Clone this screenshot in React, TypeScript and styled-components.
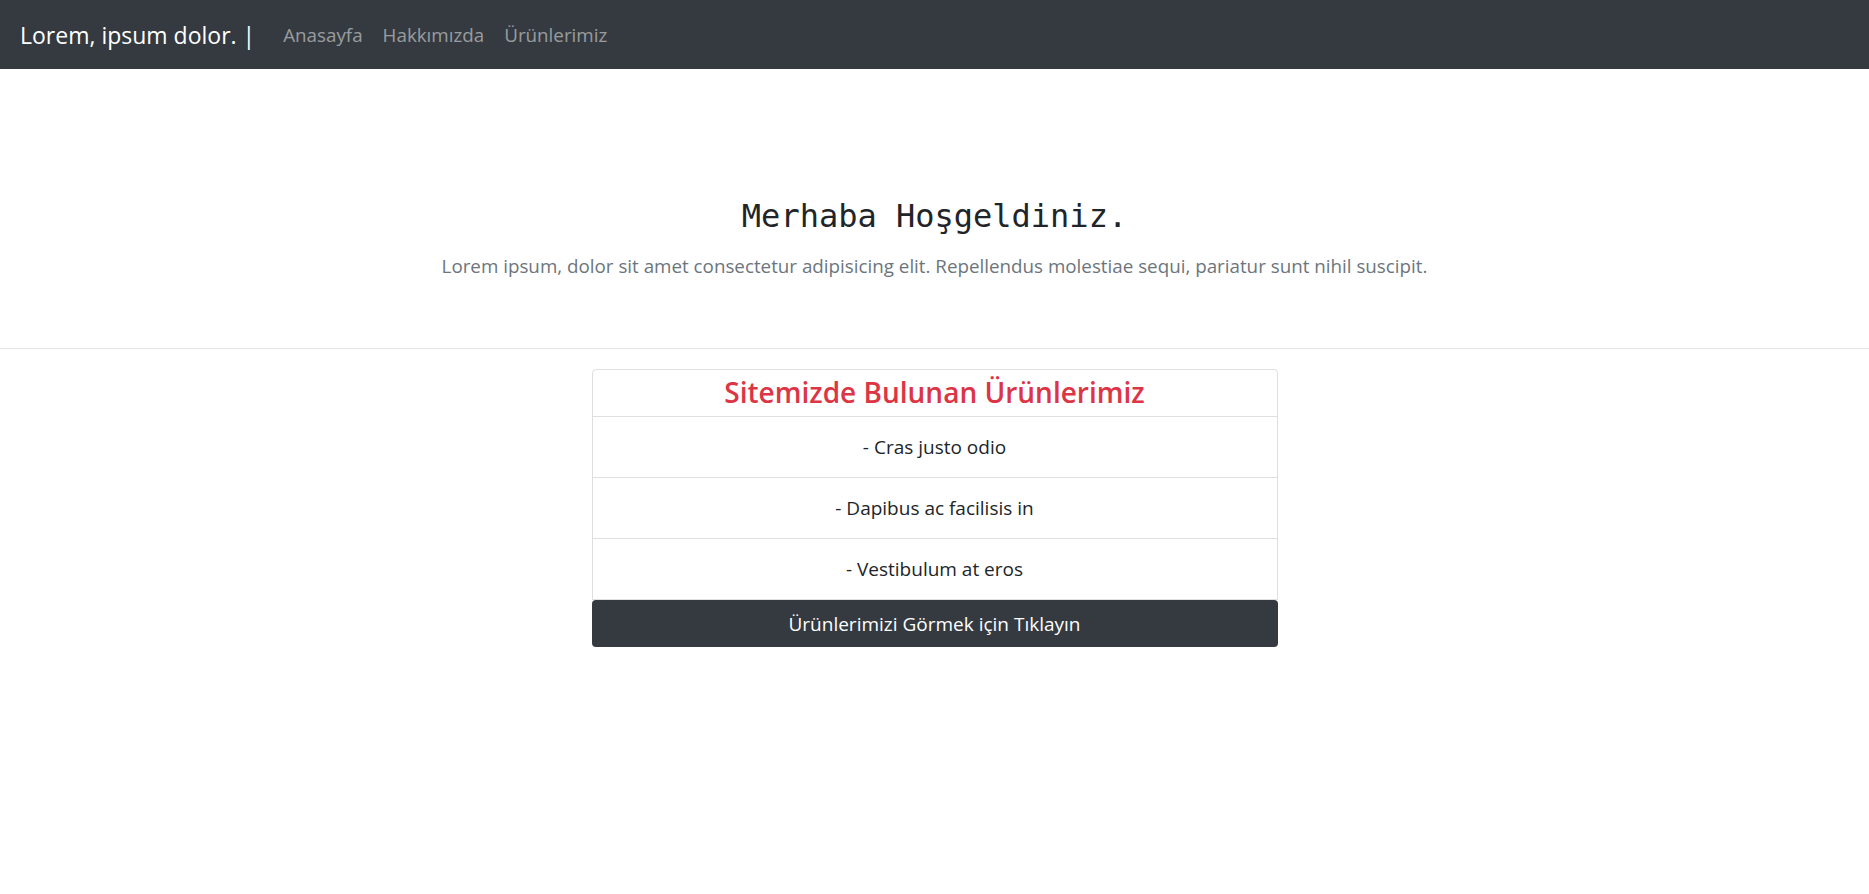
import React from "react";
import styled, { createGlobalStyle } from "styled-components";

const GlobalStyle = createGlobalStyle`
  html, body { margin: 0; padding: 0; background: #fff; }
  body {
    font-family: "Segoe UI", "Open Sans", "Noto Sans", Arial, sans-serif;
    color: #212529;
  }
  * { box-sizing: border-box; }
`;

const Navbar = styled.nav`
  height: 69px;
  background: #343a40;
  display: flex;
  align-items: center;
  padding: 0 20px;
`;

const Brand = styled.a`
  color: #fff;
  font-size: 23px;
  margin-right: 18px;
  text-decoration: none;
  white-space: nowrap;
`;

const NavLinks = styled.div`
  display: flex;
  align-items: center;
`;

const NavLink = styled.a`
  color: rgba(255, 255, 255, 0.5);
  font-size: 18.8px;
  padding: 0 10px;
  text-decoration: none;
  white-space: nowrap;
`;

const Hero = styled.header`
  padding-top: 128px;
  padding-bottom: 67px;
  text-align: center;
`;

const HeroTitle = styled.h1`
  margin: 0 0 16px;
  font-family: "DejaVu Sans Mono", "Liberation Mono", monospace;
  font-weight: 400;
  font-size: 32px;
  line-height: 38px;
  color: #212529;
`;

const Lead = styled.p`
  margin: 0;
  font-size: 18.8px;
  line-height: 30px;
  color: #6c757d;
`;

const Divider = styled.hr`
  margin: 0;
  border: 0;
  border-top: 1px solid rgba(0, 0, 0, 0.1);
`;

const Card = styled.section`
  width: 686px;
  margin: 20px auto 0;
  display: flex;
  flex-direction: column;
`;

const Panel = styled.div`
  border: 1px solid rgba(0, 0, 0, 0.125);
  border-radius: 4px 4px 0 0;
`;

const CardHeader = styled.div`
  height: 46px;
  display: flex;
  align-items: center;
  justify-content: center;
`;

const CardTitle = styled.h3`
  margin: 0;
  font-size: 28px;
  font-weight: 600;
  line-height: 1.2;
  color: #dc3545;
`;

const Item = styled.div`
  border-top: 1px solid rgba(0, 0, 0, 0.125);
  padding: 15px;
  text-align: center;
  font-size: 19px;
  line-height: 30px;
  color: #212529;
`;

const DarkButton = styled.button`
  display: block;
  width: 100%;
  height: 47px;
  border: 0;
  border-radius: 4px;
  background: #343a40;
  color: #fff;
  font-family: inherit;
  font-size: 19px;
  line-height: 30px;
  cursor: pointer;
`;

const items = ["- Cras justo odio", "- Dapibus ac facilisis in", "- Vestibulum at eros"];

export default function App() {
  return (
    <>
      <GlobalStyle />
      <Navbar>
        <Brand href="#">Lorem, ipsum dolor. |</Brand>
        <NavLinks>
          <NavLink href="#">Anasayfa</NavLink>
          <NavLink href="#">Hakkımızda</NavLink>
          <NavLink href="#">Ürünlerimiz</NavLink>
        </NavLinks>
      </Navbar>
      <Hero>
        <HeroTitle>Merhaba Hoşgeldiniz.</HeroTitle>
        <Lead>
          Lorem ipsum, dolor sit amet consectetur adipisicing elit. Repellendus molestiae sequi, pariatur sunt nihil suscipit.
        </Lead>
      </Hero>
      <Divider />
      <Card>
        <Panel>
          <CardHeader>
            <CardTitle>Sitemizde Bulunan Ürünlerimiz</CardTitle>
          </CardHeader>
          {items.map((t) => (
            <Item key={t}>{t}</Item>
          ))}
        </Panel>
        <DarkButton>Ürünlerimizi Görmek için Tıklayın</DarkButton>
      </Card>
    </>
  );
}
